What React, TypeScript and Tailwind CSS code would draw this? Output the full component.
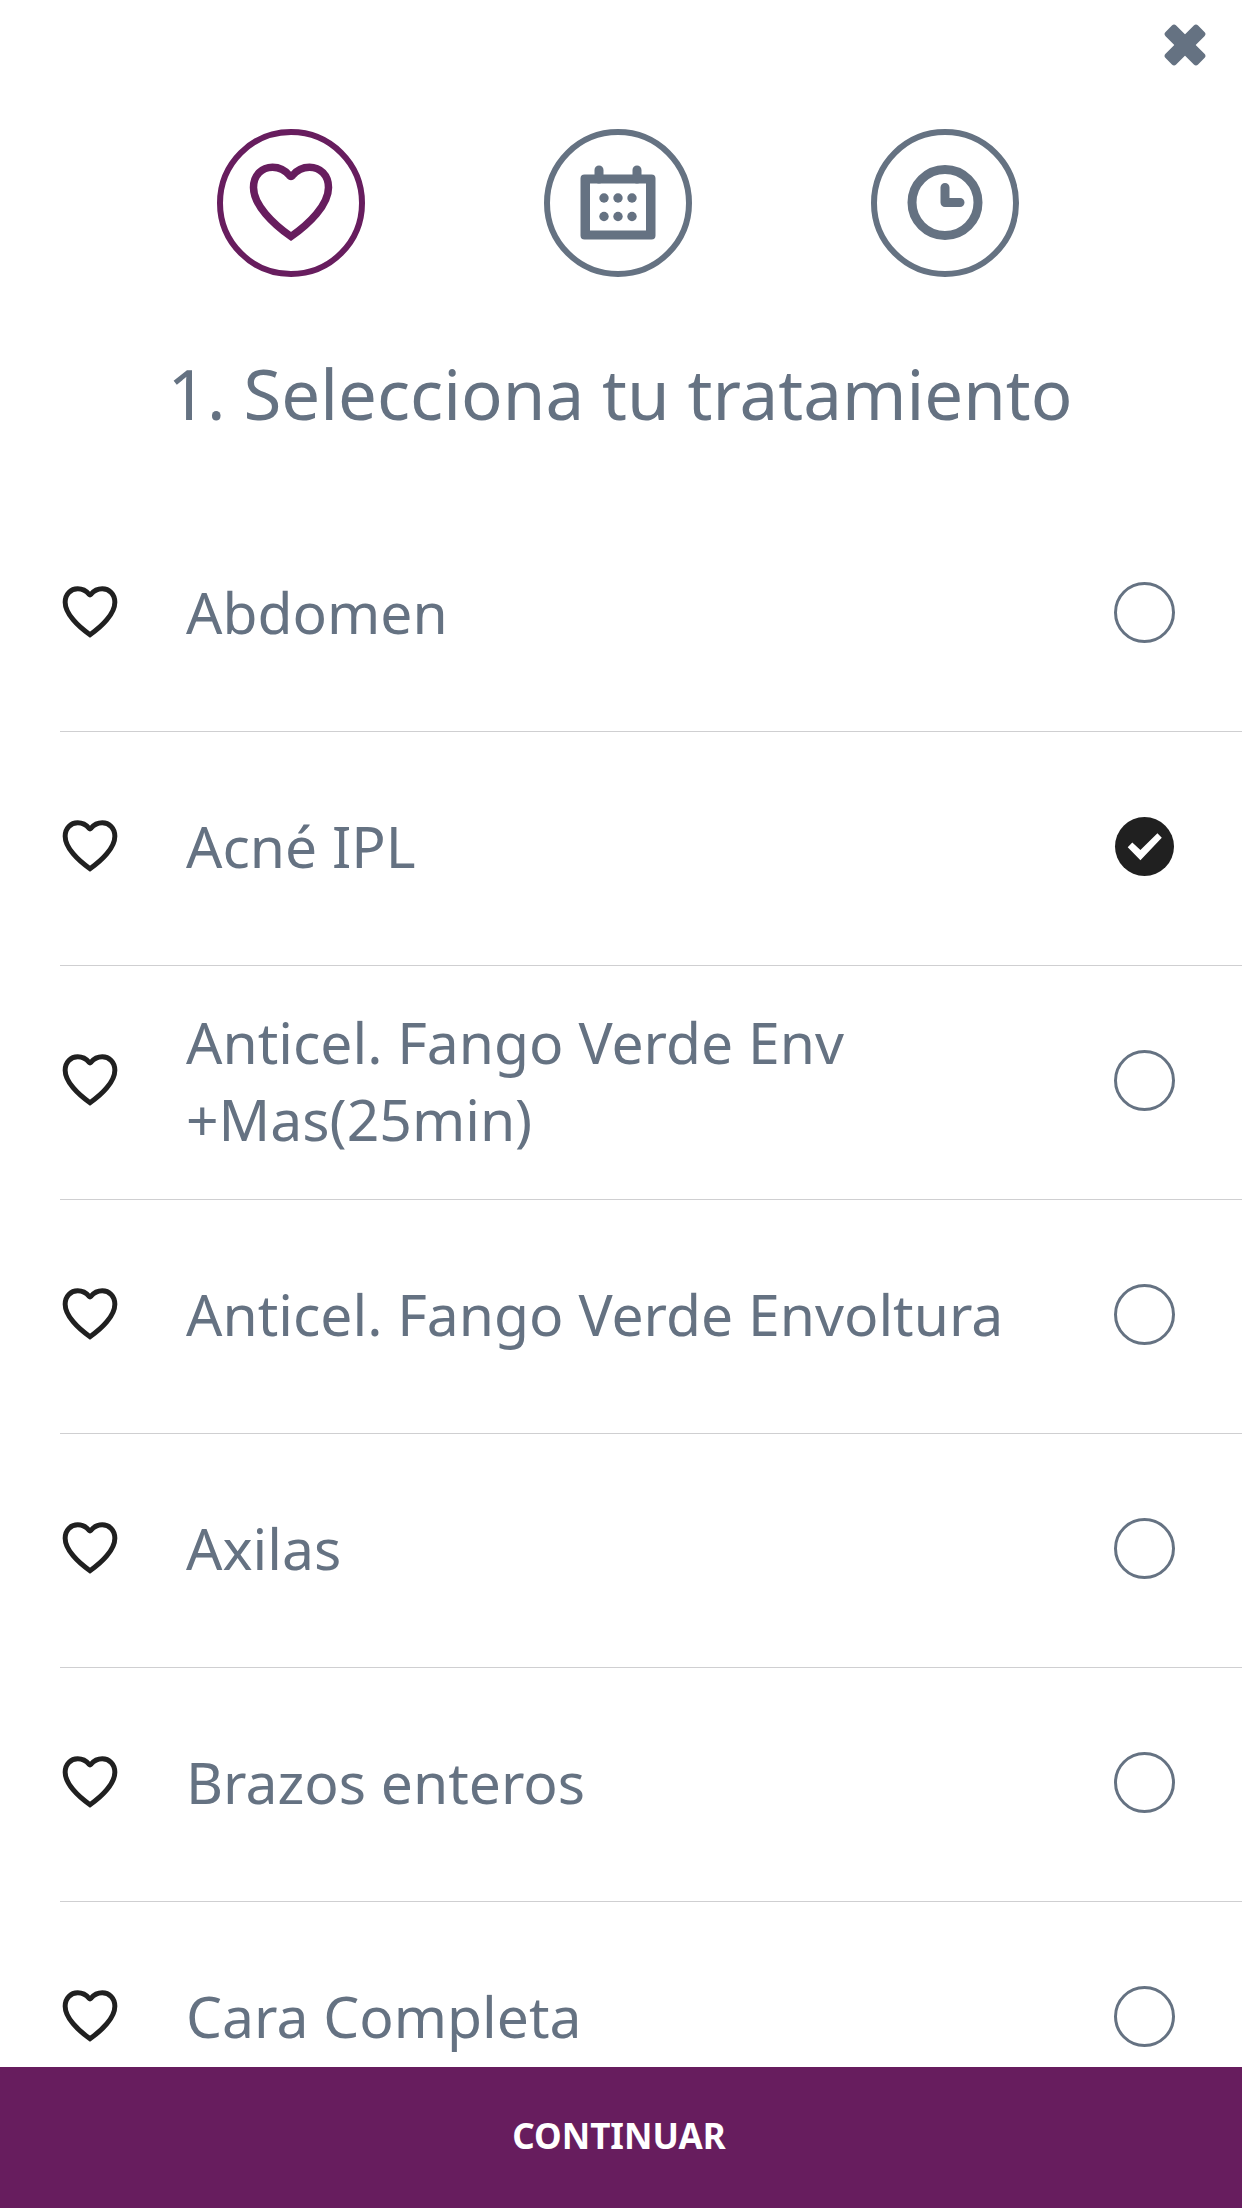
import React, { useState } from "react";

interface Step {
  id: string;
  label: string;
  icon: React.ReactNode;
}

const TREATMENTS = [
  "Abdomen",
  "Acné IPL",
  "Anticel. Fango Verde Env +Mas(25min)",
  "Anticel. Fango Verde Envoltura",
  "Axilas",
  "Brazos enteros",
  "Cara Completa",
];

function HeartIcon({ className }: { className: string }) {
  return (
    <svg viewBox="0 0 84 80" fill="none" stroke="currentColor" strokeWidth="7.5" className={className} aria-hidden="true">
      <path
        strokeMiterlimit="10"
        d="M42 73.500C24 61 4.500 42 4.500 24.500C4.500 12 13 4.200 23.500 4.200C31 4.200 36 7 40.500 12.500Q42 14 43.500 12.500C48 7 53 4.200 60.500 4.200C71 4.200 79.500 12 79.500 24.500C79.500 42 60 61 42 73.500Z"
      />
    </svg>
  );
}

function CalendarIcon() {
  return (
    <svg viewBox="0 0 76 76" fill="currentColor" className="size-[76px]" aria-hidden="true">
      <path
        fillRule="evenodd"
        d="M4.500 9.500H71.500Q75.500 9.500 75.500 13.500V70.500Q75.500 74.500 71.500 74.500H4.500Q0.500 74.500 0.500 70.500V13.500Q0.500 9.500 4.500 9.500ZM10 18.500V65.500H66V18.500Z"
      />
      <path d="M19 5V14M57 5V14" stroke="currentColor" strokeWidth="9" strokeLinecap="round" />
      {[24, 38, 52].map((x) => (
        <g key={x}>
          <circle cx={x} cy="33" r="4.700" />
          <circle cx={x} cy="51.500" r="4.700" />
        </g>
      ))}
    </svg>
  );
}

function ClockIcon() {
  return (
    <svg viewBox="0 0 76 76" fill="none" stroke="currentColor" strokeWidth="9" className="size-[76px]" aria-hidden="true">
      <circle cx="38" cy="37.500" r="33" />
      <path d="M38 22.500V37.500H53" strokeLinecap="round" strokeLinejoin="round" />
    </svg>
  );
}

const STEPS: Step[] = [
  { id: "treatment", label: "Tratamiento", icon: <HeartIcon className="h-20 w-[84px]" /> },
  { id: "date", label: "Fecha", icon: <CalendarIcon /> },
  { id: "time", label: "Hora", icon: <ClockIcon /> },
];

export default function App() {
  const [step, setStep] = useState("treatment");
  const [selected, setSelected] = useState("Acné IPL");

  return (
    <div className="flex h-screen flex-col bg-white font-['Noto_Sans',sans-serif] text-[#657282]">
      <header className="flex shrink-0 flex-col">
        <div className="flex justify-end px-8 pt-5">
          <button type="button" aria-label="Cerrar" className="p-1">
            <svg viewBox="0 0 42 42" fill="currentColor" className="size-[42px]" aria-hidden="true">
              <rect x="-2" y="13.5" width="46" height="15" rx="3" transform="rotate(45 21 21)" />
              <rect x="-2" y="13.5" width="46" height="15" rx="3" transform="rotate(-45 21 21)" />
            </svg>
          </button>
        </div>

        {/* Booking steps */}
        <nav className="flex justify-center gap-[179px] pt-[59px] pr-1.5">
          {STEPS.map((s) => (
            <button
              key={s.id}
              type="button"
              aria-label={s.label}
              onClick={() => setStep(s.id)}
              className={`flex size-[148px] items-center justify-center rounded-full border-[6px] ${
                step === s.id ? "border-[#671d5e] text-[#671d5e]" : "border-[#657282]"
              }`}
            >
              {s.icon}
            </button>
          ))}
        </nav>

        <h1 className="pt-[68px] pr-0.5 pb-[57px] text-center text-[69px] leading-[96px]">
          1. Selecciona tu tratamiento
        </h1>
      </header>

      <main className="min-h-0 flex-1 overflow-hidden pl-[60px]">
        {TREATMENTS.map((name) => (
          <label
            key={name}
            className="flex h-[234px] cursor-pointer items-center border-b border-[#cfcfd1] pr-[67px] pb-1"
          >
            <HeartIcon className="ml-0.5 h-[53px] w-14 shrink-0 text-[#202020]" />
            <span className="ml-[68px] flex-1 pr-20 text-[57px] leading-[77px]">{name}</span>
            <span className="grid size-[61px] shrink-0 place-items-center *:col-start-1 *:row-start-1">
              <input
                type="radio"
                name="treatment"
                value={name}
                checked={selected === name}
                onChange={() => setSelected(name)}
                className="peer size-[61px] appearance-none rounded-full border-[3px] border-[#657282] checked:size-[59px] checked:border-0 checked:bg-[#202020]"
              />
              <svg
                viewBox="0 0 58 58"
                className="pointer-events-none hidden size-[59px] fill-white peer-checked:block"
                aria-hidden="true"
              >
                <path d="M12.500 29.700L17 25L25 32.500L41.700 16L46 20.300L25 42.500Z" />
              </svg>
            </span>
          </label>
        ))}
      </main>

      <button
        type="button"
        className="h-[141px] shrink-0 bg-[#671d5e] pr-1 pb-0.5 text-center text-[35px] font-bold text-white"
      >
        CONTINUAR
      </button>
    </div>
  );
}
